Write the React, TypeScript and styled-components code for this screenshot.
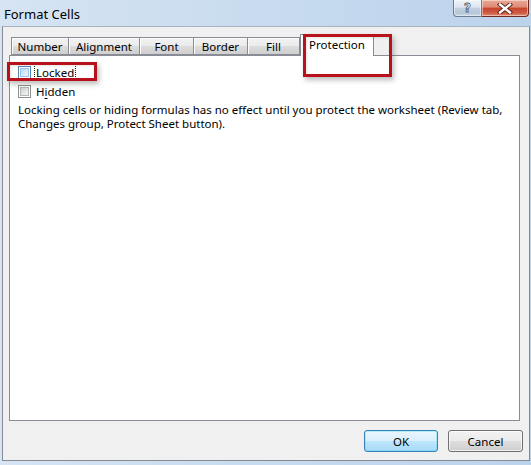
import React from "react";
import styled, { createGlobalStyle } from "styled-components";

const Global = createGlobalStyle`
  html, body { margin: 0; padding: 0; background: #c8daee; }
  body { font-family: "Noto Sans", "Open Sans", sans-serif; }
  * { box-sizing: border-box; }
`;

const Window = styled.div`
  width: 531px;
  height: 465px;
  display: flex;
  flex-direction: column;
  padding: 0 1px 4px 2px;
  background: linear-gradient(90deg, #d6e4f3 0%, #c9dcef 45%, #bcd3ec 100%);
  position: relative;
  overflow: hidden;
`;

const TitleBar = styled.div`
  height: 26px;
  display: flex;
  align-items: flex-start;
  justify-content: space-between;
`;

const Title = styled.div`
  font-family: "Noto Sans", sans-serif;
  font-size: 13px;
  color: #000;
  padding: 5px 0 0 2px;
`;

const Caption = styled.div`
  display: flex;
  margin-right: 1px;
`;

const CapButton = styled.div<{ $close?: boolean }>`
  width: ${(p) => (p.$close ? 47 : 29)}px;
  height: 17px;
  display: flex;
  align-items: center;
  justify-content: center;
  border: 1px solid ${(p) => (p.$close ? "#6f2a22" : "#6e7d8e")};
  border-top: none;
  border-left: ${(p) => (p.$close ? "none" : undefined)};
  border-radius: ${(p) => (p.$close ? "0 0 4px 0" : "0 0 0 4px")};
  background: ${(p) =>
    p.$close
      ? "linear-gradient(180deg, #e9a997 0%, #dd8a75 45%, #c6422d 50%, #cf5b45 80%, #e38a6e 100%)"
      : "linear-gradient(180deg, #eef3f8 0%, #dde6f0 45%, #c3d1e0 50%, #b6c6d8 80%, #c9d7e6 100%)"};
  box-shadow: inset 0 0 0 1px rgba(255, 255, 255, 0.45);
`;

const HelpGlyph = styled.span`
  font-family: "DejaVu Sans", sans-serif;
  font-weight: bold;
  font-size: 12px;
  color: #fff;
  line-height: 1;
  -webkit-text-stroke: 0.8px #4b5b70;
  margin-top: -1px;
`;

const Body = styled.div`
  flex: 1;
  display: flex;
  flex-direction: column;
  background: #f0f0f0;
  border: 1px solid #868b93;
  border-top-color: #a9b3bf;
  padding: 7px 0 0 6px;
`;

const TabRow = styled.div`
  display: flex;
  align-items: flex-end;
  height: 21px;
  padding-left: 2px;
  position: relative;
  z-index: 1;
`;

const Tab = styled.div<{ $w: number; $active?: boolean }>`
  width: ${(p) => p.$w}px;
  height: ${(p) => (p.$active ? 22 : 18)}px;
  margin-bottom: ${(p) => (p.$active ? -1 : 0)}px;
  border: 1px solid #898c95;
  border-bottom: ${(p) => (p.$active ? "none" : "1px solid #898c95")};
  border-right: ${(p) => (p.$active ? "1px solid #898c95" : "none")};
  background: ${(p) =>
    p.$active ? "#ffffff" : "linear-gradient(180deg, #f2f2f2 0%, #ebebeb 50%, #dddddd 51%, #cfcfcf 100%)"};
  box-shadow: ${(p) => (p.$active ? "none" : "inset 1px 1px 0 #fcfcfc")};
  font-size: 11.5px;
  color: #000;
  display: flex;
  justify-content: center;
  align-items: flex-start;
  padding-top: ${(p) => (p.$active ? 2 : 1)}px;
  line-height: 15px;
  &:nth-child(5) { border-right: 1px solid #898c95; }
`;

const Panel = styled.div`
  width: 511px;
  height: 366px;
  background: #ffffff;
  border: 1px solid #898c95;
  padding: 7px 0 0 8px;
  display: flex;
  flex-direction: column;
`;

const CheckRow = styled.label`
  height: 19px;
  display: flex;
  align-items: center;
  gap: 4px;
  font-size: 11.5px;
  color: #000;
`;

const Box = styled.span<{ $focus?: boolean }>`
  width: 13px;
  height: 13px;
  border: 1px solid ${(p) => (p.$focus ? "#5586b3" : "#8e8f8f")};
  background: #fff;
  padding: 1px;
  display: flex;
  & > span {
    flex: 1;
    background: ${(p) =>
      p.$focus
        ? "linear-gradient(135deg, #b9d8f2 0%, #dcecfc 60%, #eaf4fe 100%)"
        : "linear-gradient(135deg, #cbcfd5 0%, #e6e7e8 60%, #f6f6f6 100%)"};
    border: 1px solid ${(p) => (p.$focus ? "#9cc4ea" : "#b4b4b4")};
  }
`;

const Label = styled.span<{ $focus?: boolean }>`
  padding: 0 1px;
  line-height: 15px;
  outline: ${(p) => (p.$focus ? "1px dotted #222" : "none")};
  outline-offset: 0;
  & u { text-decoration-thickness: 1px; text-underline-offset: 2px; }
`;

const Note = styled.p`
  margin: 2px 0 0 0;
  font-size: 11.5px;
  line-height: 14px;
  color: #000;
  width: 490px;
`;

const Footer = styled.div`
  display: flex;
  justify-content: flex-end;
  gap: 10px;
  padding: 9px 6px 0 0;
`;

const Button = styled.div<{ $default?: boolean; $w: number }>`
  width: ${(p) => p.$w}px;
  height: 22px;
  border-radius: 3px;
  border: 1px solid ${(p) => (p.$default ? "#3c7fb1" : "#707070")};
  background: ${(p) =>
    p.$default
      ? "linear-gradient(180deg, #eaf6fd 0%, #d9f0fc 50%, #bee6fd 51%, #a7d9f5 100%)"
      : "linear-gradient(180deg, #f2f2f2 0%, #ebebeb 50%, #dddddd 51%, #cfcfcf 100%)"};
  box-shadow: inset 0 0 0 1px ${(p) => (p.$default ? "#48d7fb55" : "#ffffffaa")};
  display: flex;
  align-items: center;
  justify-content: center;
  font-size: 11.5px;
  color: #000;
`;

const Highlight = styled.div<{ $x: number; $y: number; $w: number; $h: number }>`
  position: absolute;
  left: ${(p) => p.$x}px;
  top: ${(p) => p.$y}px;
  width: ${(p) => p.$w}px;
  height: ${(p) => p.$h}px;
  border: 3px solid #b8111b;
  box-shadow: 2px 3px 5px rgba(60, 60, 60, 0.35), inset 1px 1px 3px rgba(60, 60, 60, 0.15);
  pointer-events: none;
  z-index: 5;
`;

const CloseX = () => (
  <svg width="16" height="11" viewBox="0 0 16 11">
    <path d="M3 1.5 L13 9.5 M13 1.5 L3 9.5" stroke="#5a1d14" strokeWidth="4.2" strokeLinecap="square" />
    <path d="M3 1.5 L13 9.5 M13 1.5 L3 9.5" stroke="#ffffff" strokeWidth="2.4" strokeLinecap="square" />
  </svg>
);

const tabs: { name: string; w: number }[] = [
  { name: "Number", w: 57 },
  { name: "Alignment", w: 71 },
  { name: "Font", w: 54 },
  { name: "Border", w: 54 },
  { name: "Fill", w: 53 },
];

export default function App() {
  return (
    <>
      <Global />
      <Window>
        <TitleBar>
          <Title>Format Cells</Title>
          <Caption>
            <CapButton>
              <HelpGlyph>?</HelpGlyph>
            </CapButton>
            <CapButton $close>
              <CloseX />
            </CapButton>
          </Caption>
        </TitleBar>
        <Body>
          <TabRow>
            {tabs.map((t) => (
              <Tab key={t.name} $w={t.w}>
                {t.name}
              </Tab>
            ))}
            <Tab $w={74} $active>
              Protection
            </Tab>
          </TabRow>
          <Panel>
            <CheckRow>
              <Box $focus>
                <span />
              </Box>
              <Label $focus>
                <u>L</u>ocked
              </Label>
            </CheckRow>
            <CheckRow>
              <Box>
                <span />
              </Box>
              <Label>
                H<u>i</u>dden
              </Label>
            </CheckRow>
            <Note>
              Locking cells or hiding formulas has no effect until you protect the worksheet (Review tab,
              Changes group, Protect Sheet button).
            </Note>
          </Panel>
          <Footer>
            <Button $default $w={74}>
              OK
            </Button>
            <Button $w={75}>Cancel</Button>
          </Footer>
        </Body>
        <Highlight $x={7} $y={62} $w={90} $h={19} />
        <Highlight $x={303} $y={34} $w={89} $h={43} />
      </Window>
    </>
  );
}
